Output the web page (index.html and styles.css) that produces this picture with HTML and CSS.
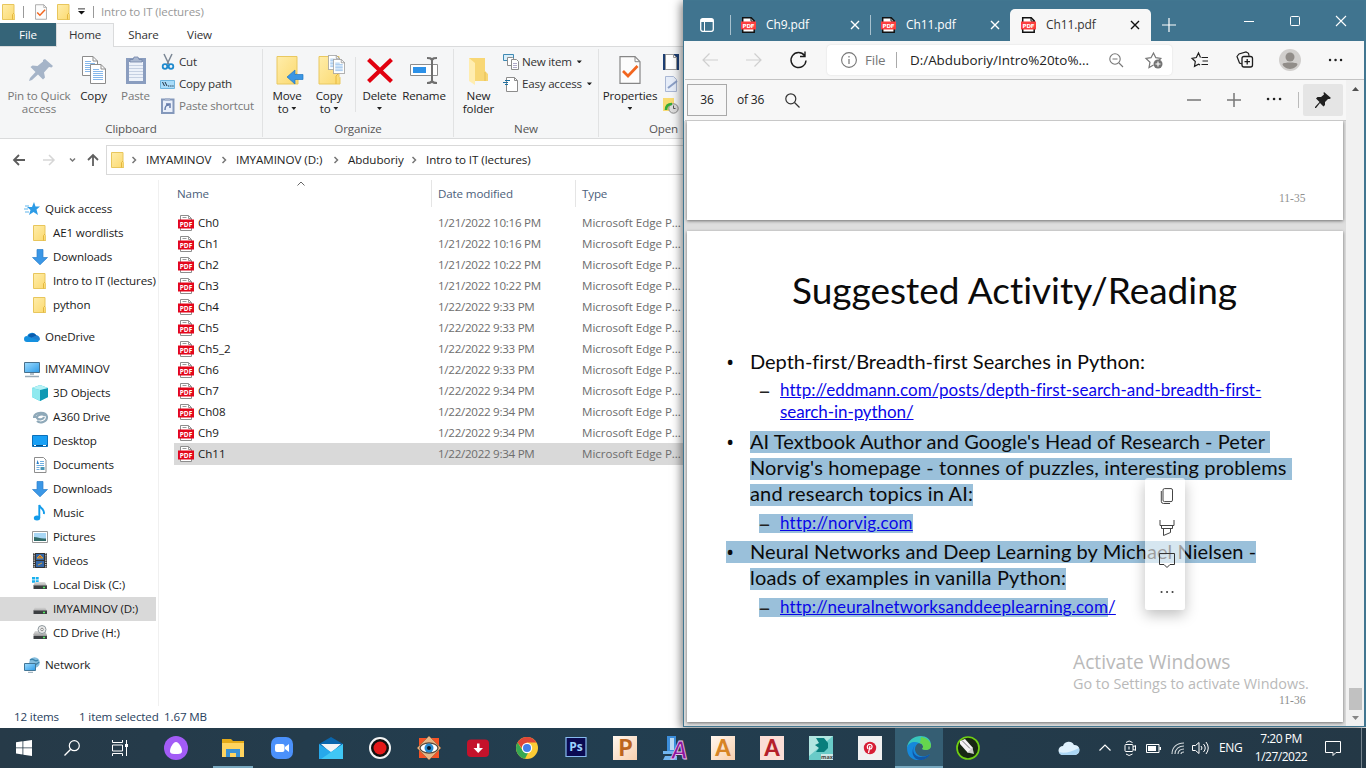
FILE: index.html
```html
<!DOCTYPE html>
<html lang="en">
<head>
<meta charset="utf-8">
<title>Desktop</title>
<link rel="stylesheet" href="styles.css">
</head>
<body>
<svg class="defs" aria-hidden="true">
  <defs>
    <linearGradient id="gFolder" x1="0" y1="0" x2="1" y2="1"><stop offset="0" stop-color="#ffedaa"/><stop offset="1" stop-color="#fbd96f"/></linearGradient>
    <linearGradient id="gScreen" x1="0" y1="0" x2="1" y2="1"><stop offset="0" stop-color="#9edcff"/><stop offset="1" stop-color="#2d9be8"/></linearGradient>
    <linearGradient id="gDisk" x1="0" y1="0" x2="0" y2="1"><stop offset="0" stop-color="#dcdcdc"/><stop offset="1" stop-color="#a9a9a9"/></linearGradient>
    <linearGradient id="gTan" x1="0" y1="0" x2="1" y2="1"><stop offset="0" stop-color="#fff7ee"/><stop offset="1" stop-color="#f8cfae"/></linearGradient>
  </defs>
</svg>
<svg class="symbols" aria-hidden="true">
  <symbol id="folder" viewBox="0 0 13 16"><path d="M.5.5h11.500v9l.8.8v5.200H.5z" fill="url(#gFolder)" stroke="#e8c65c"/><path d="M10.500 15.500v-5l1.500-1.500" fill="none" stroke="#e3b73e"/></symbol>
  <symbol id="pdf" viewBox="0 0 16 16"><path d="M2.500.5h8l3 3v12h-11z" fill="#fff" stroke="#8d8d8d"/><path d="M10.500.5v3h3M4.500 2.500h4" fill="none" stroke="#9a9a9a"/><rect y="4.500" width="16" height="9" fill="#e3071c"/><text x="8" y="11.600" class="pdf-text" text-anchor="middle">PDF</text></symbol>
  <symbol id="epdf" viewBox="0 0 15 16"><path d="M1.700.8h8.500l3 3v11.500H1.700z" fill="#fff" stroke="#111" stroke-width="1.500"/><path d="M10 .8v3.400h3" fill="none" stroke="#111"/><rect y="4.500" width="15" height="8" fill="#fb3f3f"/><text x="7.500" y="10.900" class="epdf-text" text-anchor="middle">PDF</text></symbol>
  <symbol id="down" viewBox="0 0 16 16"><path d="M5 .5h6v8h4.500L8 15.800.5 8.500H5z" fill="#3b97e6" stroke="#2b7fcb" stroke-width=".7"/></symbol>
  <symbol id="close" viewBox="0 0 10 10"><path d="M1 1l8 8M9 1l-8 8" fill="none" stroke="currentColor" stroke-width="1.400"/></symbol>
  <symbol id="chev" viewBox="0 0 6 8"><path d="M1.500 1l3 3-3 3" fill="none" stroke="#777" stroke-width="1.500"/></symbol>
  <symbol id="doc" viewBox="0 0 16 20"><path d="M.5.5h10.500l4.500 4.500v14.500H.5z" fill="#fff" stroke="#8c8c8c"/><path d="M11 .5v4.500h4.500" fill="none" stroke="#8c8c8c"/><path d="M3 7.500h10M3 9.500h10M3 11.500h10M3 13.500h10M3 15.500h10M3 5.500h6" stroke="#86b7ea"/></symbol>
  <symbol id="check" viewBox="0 0 22 28"><path d="M1 .7h15l5 5v21.600H1z" fill="#fcfcfc" stroke="#868686" stroke-width="1.200"/><path d="M16 .7v5h5" fill="none" stroke="#868686"/><path d="M4 15l5 5 9.500-10" fill="none" stroke="#f2651e" stroke-width="2.700"/></symbol>
</svg>

<div class="desktop">
  <main class="windows">
    <section class="explorer">
      <header class="ex-title">
        <svg class="i13"><use href="#folder"/></svg><i class="tsep"></i>
        <svg class="tcheck"><use href="#check"/></svg>
        <svg class="i13 second"><use href="#folder"/></svg>
        <svg class="tdrop" viewBox="0 0 8 7"><path d="M0 .5h8" stroke="#222"/><path d="M0 3h8L4 7z" fill="#111"/></svg>
        <i class="tsep"></i><span>Intro to IT (lectures)</span>
      </header>
      <nav class="ex-tabs"><b class="file">File</b><b class="home">Home</b><b class="share">Share</b><b class="view">View</b></nav>

      <div class="ribbon">
        <div class="group g-clip">
          <div class="tools">
            <div class="big off w-pin"><svg viewBox="0 0 32 32"><path d="M20 4l8 7-1.500 1.500L24 12l-5 5.500 1 5-2 2-5-5L7 25l-3 1 1-3 5.500-6-5-5 2-1.500 5 .5 5.500-4.500L18 5z" fill="#a5b4c8" transform="translate(2 -1)"/></svg><span>Pin to Quick<br>access</span></div>
            <div class="big w-copy"><svg viewBox="0 0 32 32"><use href="#doc" x="4" width="16" height="20"/><use href="#doc" x="12" y="8" width="16" height="20"/></svg><span>Copy</span></div>
            <div class="big off w-paste"><svg viewBox="0 0 32 32"><path d="M6 2h20v26H6z" fill="#8a9dbf"/><path d="M9 6h14v19H9z" fill="#edf2fa"/><path d="M10 6V3.500h3L14 1h4l1 2.500h3V6z" fill="#aab8d0" stroke="#7386aa" stroke-width=".8"/><path d="M9 9.500h14M9 12.500h14M9 15.500h14M9 18.500h14M9 21.500h14" stroke="#c5d0e2"/></svg><span>Paste</span></div>
            <div class="smalls s-clip">
              <div><svg viewBox="0 0 16 16"><path d="M4 0l5 10.500M12 0L7 10.500" stroke="#7b8795" stroke-width="1.500" fill="none"/><circle cx="5" cy="12.500" r="2.300" fill="none" stroke="#1e8ace" stroke-width="1.800"/><circle cx="11" cy="12.500" r="2.300" fill="none" stroke="#1e8ace" stroke-width="1.800"/></svg>Cut</div>
              <div><svg viewBox="0 0 16 16"><path d="M.5 4.500h14v8H.5z" fill="#a8dcfa" stroke="#6fb5de"/><path d="M2.500 6l2 4M5 6l2 4M8 10h1.300M10.200 10h1.300M12.300 10h1.300" stroke="#234" fill="none"/></svg>Copy path</div>
              <div class="off"><svg viewBox="0 0 16 16"><path d="M2 1.500h11.500V15H2z" fill="#e9effa" stroke="#8498bb" stroke-width="2"/><path d="M5 0h5v3H5z" fill="#a9b6ce"/><path d="M5 12c0-4 1-5 4-5M6 6h4v4" fill="none" stroke="#657caa" stroke-width="1.500"/></svg>Paste shortcut</div>
            </div>
          </div>
          <h3>Clipboard</h3>
        </div>
        <div class="group g-org">
          <div class="tools">
            <div class="big w-move"><svg viewBox="0 0 32 32"><path d="M6 .5h20v20l1 1v6.500H6z" fill="url(#gFolder)" stroke="#e9c860"/><path d="M23 28v-8l3-3" fill="none" stroke="#e6b93f"/><path d="M16 21l8-7v4.500h8v5h-8V28z" fill="#3a96e4" stroke="#1f78c4" stroke-width=".7"/></svg><span>Move<br>to <u class="dd"></u></span></div>
            <div class="big w-copyto"><svg viewBox="0 0 32 32"><path d="M6 .5h20v20l1 1v6.500H6z" fill="url(#gFolder)" stroke="#e9c860"/><path d="M23 28v-8l3-3" fill="none" stroke="#e6b93f"/><use href="#doc" x="15" y="-1" width="12" height="15"/><use href="#doc" x="20" y="3" width="12" height="15"/></svg><span>Copy<br>to <u class="dd"></u></span></div>
            <i class="vsep"></i>
            <div class="big w-del"><svg viewBox="0 0 32 32"><path d="M4.500 3.500l23 22M27.500 3.500l-23 22" stroke="#e1000f" stroke-width="4.200"/></svg><span>Delete<br><u class="dd"></u></span></div>
            <div class="big w-ren"><svg viewBox="0 0 32 32"><path d="M2.500 8.500h27v11h-27z" fill="#fff" stroke="#8c8c8c"/><path d="M5 11h13v6H5z" fill="#2c91e8"/><path d="M19 2c3 0 4 0 5 2 1-2 2-2 5-2M24 3v23M19 27c3 0 4 0 5-2 1 2 2 2 5 2" fill="none" stroke="#707070" stroke-width="2"/></svg><span>Rename</span></div>
          </div>
          <h3>Organize</h3>
        </div>
        <div class="group g-new">
          <div class="tools">
            <div class="big w-nf"><svg viewBox="0 0 32 32"><path d="M6 2h16v13l3 3v7H11z" fill="#f8d775"/><path d="M6 2l6 5v22l-6-4z" fill="#ffedb0"/><path d="M22 16v9" stroke="#e5be55"/></svg><span>New<br>folder</span></div>
            <div class="smalls s-new">
              <div><svg viewBox="0 0 16 16"><path d="M.5.500h10v6H.5z" fill="#d8eefa" stroke="#3f89b3"/><path d="M4.500 3.500h5l2 2v6h-7z" fill="#fff" stroke="#8c8c8c"/><path d="M8.500 5.500h5l2 2v8h-7z" fill="#fff" stroke="#8c8c8c"/><path d="M10 9.500h4M10 11.500h4M10 13.500h4" stroke="#b0a9c8"/></svg>New item<u class="dd"></u></div>
              <div><svg viewBox="0 0 16 16"><path d="M3.500 1.500h8l3 3v11h-11z" fill="#fff" stroke="#8c8c8c"/><path d="M11.500 1.500v3h3" fill="none" stroke="#8c8c8c"/><path d="M2 4.500h5M0 6.500h5M2 8.500h3" stroke="#1d6f9f" stroke-width="1.200"/></svg>Easy access<u class="dd"></u></div>
            </div>
          </div>
          <h3>New</h3>
        </div>
        <div class="group g-open">
          <div class="tools">
            <div class="big w-prop"><svg viewBox="0 0 32 32"><use href="#check" x="5" width="22" height="28"/></svg><span>Properties<br><u class="dd"></u></span></div>
            <div class="smalls s-open">
              <div><svg viewBox="0 0 16 16"><path d="M0 0h16v16H0z" fill="#1d3f73"/><path d="M2.500.5h8l3 3v12h-11z" fill="#fff" stroke="#999"/><path d="M10.500.5v3h3" fill="none" stroke="#999"/></svg></div>
              <div><svg viewBox="0 0 16 16"><path d="M2.500.5h8l3 3v12h-11z" fill="#e6edf9" stroke="#a9b7d4"/><path d="M5 12l9-7" stroke="#8b9fc6" stroke-width="2"/></svg></div>
              <div><svg viewBox="0 0 16 16"><path d="M0 0h11v13H0z" fill="#f8db72"/><circle cx="10.500" cy="10.500" r="4.700" fill="#ddd" stroke="#888"/><path d="M10.500 7.500v3h2" stroke="#555" fill="none"/><path d="M3 12c0-4 2-6 6-6" fill="none" stroke="#35ab38" stroke-width="2.700"/></svg></div>
            </div>
          </div>
          <h3>Open</h3>
        </div>
      </div>

      <div class="address">
        <svg class="arrows" viewBox="0 0 94 16"><path d="M25 8H14M19 3l-5 5 5 5" fill="none" stroke="#5c5c5c" stroke-width="1.800"/><path d="M43 8h11M49 3l5 5-5 5" fill="none" stroke="#d6d6d6" stroke-width="1.500"/><path d="M70 6.500l2.500 2.500L75 6.500" fill="none" stroke="#777" stroke-width="1.500"/><path d="M93 14V3M88 8l5-5 5 5" fill="none" stroke="#5f5f5f" stroke-width="1.800"/></svg>
        <div class="crumbs"><svg class="i13"><use href="#folder"/></svg><svg class="ch c0"><use href="#chev"/></svg><span class="k1">IMYAMINOV</span><svg class="ch"><use href="#chev"/></svg><span class="k2">IMYAMINOV (D:)</span><svg class="ch"><use href="#chev"/></svg><span class="k3">Abduboriy</span><svg class="ch"><use href="#chev"/></svg><span>Intro to IT (lectures)</span></div>
      </div>

      <div class="ex-body">
        <aside class="tree">
          <div class="top"><svg viewBox="0 0 16 16"><path d="M10 1l1.500 4.500H16l-3.500 3L14 14l-4.500-3L5 14l1.500-5L3 6h5z" fill="#2c9be6"/><path d="M1 5h4M0 8h4M1 11h4" stroke="#61b5ec" stroke-width="1.200"/></svg>Quick access</div>
          <div><svg viewBox="-1 0 16 16"><use href="#folder" width="13" height="16"/></svg>AE1 wordlists</div>
          <div><svg><use href="#down"/></svg>Downloads</div>
          <div><svg viewBox="-1 0 16 16"><use href="#folder" width="13" height="16"/></svg><em>Intro to IT (lectures)</em></div>
          <div class="last"><svg viewBox="-1 0 16 16"><use href="#folder" width="13" height="16"/></svg>python</div>
          <div class="top last"><svg viewBox="0 0 16 16"><path d="M3 8a5 5 0 0 1 9-2 4 4 0 0 1 2 7H3a3 3 0 0 1 0-6z" fill="#1590df"/><path d="M4 7a5 5 0 0 1 8.500-.5L8 9z" fill="#0b5cad"/><path d="M7 8.500l6-2a3.500 3.500 0 0 1 2.500 5z" fill="#1f7fd0"/></svg>OneDrive</div>
          <div class="top"><svg viewBox="0 0 16 16"><path d="M.5 1.500h15v10H.5z" fill="url(#gScreen)" stroke="#48708c"/><path d="M6 13h4M1 15.500h14" stroke="#9aabb7" stroke-width="1.300"/></svg>IMYAMINOV</div>
          <div><svg viewBox="0 0 16 16"><path d="M8 0l8 3v9l-8 4-8-4V3z" fill="#22c1d6"/><path d="M0 3l8 2v11l-8-4z" fill="#8fe9ef"/><path d="M8 5l8-2v9l-8 4z" fill="#1099b4"/><path d="M8 0l8 3-8 2-8-2z" fill="#b7f2f5"/></svg>3D Objects</div>
          <div><svg viewBox="0 0 16 16"><path d="M2 8c1-5 12-6 13 0 0 5-7 7-10 4M13 7c-2-3-9-1-8 2 1 2 6 2 7-1M1 8h4" fill="none" stroke="#8fa9b9" stroke-width="2.200"/></svg>A360 Drive</div>
          <div><svg viewBox="0 0 16 16"><path d="M.5 2.500h15v11H.5z" fill="#19a0f5" stroke="#0b70ba"/><path d="M1 12.500h14" stroke="#064f86"/><path d="M2 12.500h2M11 12.500h3" stroke="#fff"/></svg>Desktop</div>
          <div><svg viewBox="0 0 16 16"><path d="M2.500.5h9l2.500 2.500v12.500H2.500z" fill="#fff" stroke="#8d8d8d"/><path d="M8 4.500h4M8 6.500h4M4.500 8.500H12M4.500 10.500h3M4.500 12.500h3" stroke="#6faee0"/><path d="M4.500 7l1-4 1.500 4z" fill="#267bc7"/><path d="M8.500 10h4v3h-4z" fill="#4a95b5"/></svg>Documents</div>
          <div><svg><use href="#down"/></svg>Downloads</div>
          <div><svg viewBox="0 0 16 16"><ellipse cx="5" cy="13" rx="3.200" ry="2.500" fill="#129bea"/><path d="M7.300 13V0c1 4 6 4 4.500 9" fill="none" stroke="#129bea" stroke-width="1.900"/></svg>Music</div>
          <div><svg viewBox="0 0 16 16"><path d="M.5 2.500h15v11H.5z" fill="#fff" stroke="#999"/><path d="M2 4h12v8H2z" fill="#a9d7f5"/><path d="M2 8c4 0 6 2 12 1.500V12H2z" fill="#326b68"/></svg>Pictures</div>
          <div><svg viewBox="0 0 16 16"><path d="M1 0h14v15H1z" fill="#333"/><path d="M4 1h8v6H4zM4 8h8v6H4z" fill="#3567a8"/><path d="M2.200 0v15M13.800 0v15" stroke="#ddd" stroke-width="1.300" stroke-dasharray="1.200 1"/><path d="M5 5l3-3 3 3zM6 12l4-2" fill="#b55935" stroke="#d6a33b"/></svg>Videos</div>
          <div><svg viewBox="0 0 16 16"><path d="M0 0h3v2.500H0zM3.700 0h3v2.500h-3zM0 3.200h3v2.500H0zM3.700 3.200h3v2.500h-3z" fill="#19b0ee"/><path d="M3 5h10l2 4H1z" fill="url(#gDisk)"/><path d="M1.500 8.500h13.500V12H1.500z" fill="#3c3f42"/><path d="M11 10.500h2" stroke="#52ef62" stroke-width="1.300"/></svg>Local Disk (C:)</div>
          <div class="sel"><svg viewBox="0 0 16 16"><path d="M3 6h10l2 4H1z" fill="url(#gDisk)"/><path d="M1.500 9.500h13.500V13H1.500z" fill="#3c3f42"/><path d="M11 11.500h2" stroke="#52ef62" stroke-width="1.300"/></svg>IMYAMINOV (D:)</div>
          <div class="last"><svg viewBox="0 0 16 16"><path d="M3 6h10l2 4H1z" fill="url(#gDisk)"/><circle cx="10" cy="4.500" r="4" fill="#ececec" stroke="#8f999e"/><circle cx="10" cy="4.500" r="1.300" fill="#fff" stroke="#888"/><path d="M1.500 10.500h13.500V14H1.500z" fill="#3c3f42"/><path d="M11 12.500h2" stroke="#52ef62" stroke-width="1.300"/></svg>CD Drive (H:)</div>
          <div class="top"><svg viewBox="0 0 16 16"><circle cx="10.500" cy="5.500" r="5.300" fill="#85bddd"/><path d="M6 3c4-3 4 3 8 0M10 10c0-3 4-3 5-5" fill="none" stroke="#3e86ae" stroke-width="1.400"/><path d="M.5 6.500h11v7H.5z" fill="url(#gScreen)" stroke="#427696"/><path d="M4 15.300h5" stroke="#8fa4b2"/></svg>Network</div>
        </aside>
        <div class="files">
          <svg class="sort" viewBox="0 0 8 5"><path d="M.5 4.500L4 1l3.500 3.500" fill="none" stroke="#666"/></svg>
          <div class="fhead"><span>Name</span><span class="c">Date modified</span><span class="c">Type</span></div>
          <div class="rows">
            <div class="r"><svg><use href="#pdf"/></svg><b>Ch0</b><span class="d">1/21/2022 10:16 PM</span><span>Microsoft Edge P...</span></div>
            <div class="r"><svg><use href="#pdf"/></svg><b>Ch1</b><span class="d">1/21/2022 10:16 PM</span><span>Microsoft Edge P...</span></div>
            <div class="r"><svg><use href="#pdf"/></svg><b>Ch2</b><span class="d">1/21/2022 10:22 PM</span><span>Microsoft Edge P...</span></div>
            <div class="r"><svg><use href="#pdf"/></svg><b>Ch3</b><span class="d">1/21/2022 10:22 PM</span><span>Microsoft Edge P...</span></div>
            <div class="r"><svg><use href="#pdf"/></svg><b>Ch4</b><span class="d">1/22/2022 9:33 PM</span><span>Microsoft Edge P...</span></div>
            <div class="r"><svg><use href="#pdf"/></svg><b>Ch5</b><span class="d">1/22/2022 9:33 PM</span><span>Microsoft Edge P...</span></div>
            <div class="r"><svg><use href="#pdf"/></svg><b>Ch5_2</b><span class="d">1/22/2022 9:33 PM</span><span>Microsoft Edge P...</span></div>
            <div class="r"><svg><use href="#pdf"/></svg><b>Ch6</b><span class="d">1/22/2022 9:33 PM</span><span>Microsoft Edge P...</span></div>
            <div class="r"><svg><use href="#pdf"/></svg><b>Ch7</b><span class="d">1/22/2022 9:34 PM</span><span>Microsoft Edge P...</span></div>
            <div class="r"><svg><use href="#pdf"/></svg><b>Ch08</b><span class="d">1/22/2022 9:34 PM</span><span>Microsoft Edge P...</span></div>
            <div class="r"><svg><use href="#pdf"/></svg><b>Ch9</b><span class="d">1/22/2022 9:34 PM</span><span>Microsoft Edge P...</span></div>
            <div class="r sel"><svg><use href="#pdf"/></svg><b>Ch11</b><span class="d">1/22/2022 9:34 PM</span><span>Microsoft Edge P...</span></div>
          </div>
        </div>
      </div>
      <footer class="status"><span class="n">12 items</span><span class="s">1 item selected</span><span class="z">1.67 MB</span></footer>
    </section>

    <section class="edge">
      <header class="strip">
        <svg class="tabact" viewBox="0 0 14 14"><rect x=".7" y=".7" width="12.600" height="12.600" rx="2" fill="none" stroke="#fff" stroke-width="1.300"/><path d="M1 1h12v3H1z" fill="#fff"/><path d="M4.500 4v9" stroke="#fff"/></svg>
        <div class="tab t1"><svg class="ei"><use href="#epdf"/></svg><span>Ch9.pdf</span><svg class="x"><use href="#close"/></svg></div>
        <div class="tab t2"><svg class="ei"><use href="#epdf"/></svg><span>Ch11.pdf</span><svg class="x"><use href="#close"/></svg></div>
        <div class="tab on"><svg class="ei"><use href="#epdf"/></svg><span>Ch11.pdf</span><svg class="x"><use href="#close"/></svg></div>
        <svg class="plus" viewBox="0 0 14 14"><path d="M7 0v14M0 7h14" stroke="#fff" stroke-width="1.200"/></svg>
        <div class="winctl"><svg viewBox="0 0 10 10"><path d="M0 5.500h10" stroke="#fff"/></svg><svg viewBox="0 0 10 10"><rect x=".5" y=".5" width="9" height="9" rx="1" fill="none" stroke="#fff"/></svg><svg viewBox="0 0 10 10"><path d="M0 0l10 10M10 0L0 10" stroke="#fff" stroke-width="1.100"/></svg></div>
      </header>
      <div class="urlbar">
        <svg class="nav" viewBox="0 0 144 38"><path d="M36 19H21M27.500 12.500L21 19l6.500 6.500M64 19h15M72.500 12.500L79 19l-6.500 6.500" fill="none" stroke="#cfcfcf" stroke-width="1.200"/><path d="M122.500 14.500a7.500 7.500 0 1 0 1.500 5M123 10.500v5h-5" fill="none" stroke="#1b1b1b" stroke-width="1.400"/></svg>
        <div class="url">
          <svg class="i16" viewBox="0 0 16 16"><circle cx="8" cy="8" r="7.400" fill="none" stroke="#767676" stroke-width="1.100"/><path d="M8 7v5M8 4v1.500" stroke="#767676" stroke-width="1.200"/></svg>
          <span class="scheme">File</span><i></i><span class="path">D:/Abduboriy/Intro%20to%...</span>
          <svg class="lens" viewBox="0 0 15 15"><circle cx="6" cy="6" r="5.200" fill="none" stroke="#777" stroke-width="1.100"/><path d="M10 10l4 4M3.500 6h5" stroke="#777" stroke-width="1.100"/></svg>
          <svg class="fav" viewBox="0 0 18 17"><path d="M8.500 13l-4.500 2.500 1-5.300L1 6.500l5-.8L8.500 1l2.300 4.700 5 .8-2 2" fill="none" stroke="#777" stroke-width="1.200"/><circle cx="13" cy="12" r="4.500" fill="#747474"/><path d="M13 9.500v5M10.500 12h5" stroke="#fff" stroke-width="1.100"/></svg>
        </div>
        <div class="extras">
          <svg viewBox="0 0 18 18"><path d="M9.500 6.500L7.500 2 5.300 6.500l-4.300.8 3.300 3.200-.8 4.800 4-2.200 1.500.8M10.500 6.500H17M11.500 10H17M10.500 13.500H17" fill="none" stroke="#1e1e1e" stroke-width="1.200"/></svg>
          <svg viewBox="0 0 18 18"><path d="M6 13l-2.500-1L1 5.500 3 3l7-2 2.500 1.300.6 2.500" fill="none" stroke="#1e1e1e" stroke-width="1.200"/><rect x="6" y="5.500" width="10.500" height="10.500" rx="2" fill="#f7f7f7" stroke="#1e1e1e" stroke-width="1.300"/><path d="M11.200 8v5.500M8.500 10.700H14" stroke="#1e1e1e" stroke-width="1.300"/></svg>
          <svg class="ava" viewBox="0 0 22 22"><circle cx="11" cy="11" r="11" fill="#d1cfcd"/><circle cx="11" cy="8" r="4.500" fill="#918d89"/><path d="M3.500 15c1-2 14-2 15 0 0 2-4 5-7.500 5s-7.500-3-7.500-5z" fill="#918d89"/></svg>
          <svg viewBox="0 0 18 18"><path d="M4 9h.1M9.500 9h.1M15 9h.1" stroke="#222" stroke-width="2.400" stroke-linecap="round"/></svg>
        </div>
      </div>
      <div class="pdf">
        <div class="pdfmain">
          <div class="pdfbar">
            <div class="num">36</div><span>of 36</span>
            <svg class="find" viewBox="0 0 15 15"><circle cx="5.800" cy="5.800" r="5" fill="none" stroke="#333" stroke-width="1.200"/><path d="M9.500 9.500l5 5" stroke="#333" stroke-width="1.300"/></svg>
            <svg class="zooms" viewBox="0 0 112 16"><path d="M1 8h14M41 8h14M48 1v14" stroke="#777" stroke-width="1.500"/><path d="M82 7h.1M88 7h.1M94 7h.1" stroke="#222" stroke-width="2.500" stroke-linecap="round"/><path d="M112.500 0v16" stroke="#bbb"/></svg>
            <div class="pin"><svg viewBox="0 0 16 16"><path d="M9 0l7 6-1.500 1L13 7l-3 3v3l-1.500 1.500L5 11l-4 5H0v-1l4.500-5L1 6.500 2.500 5H6l3-2.500L8.500 1z" fill="#202020"/></svg></div>
          </div>
          <div class="pages">
            <div class="page prev"><span>11-35</span></div>
            <article class="page slide">
              <h1>Suggested Activity/Reading</h1>
              <p class="li l1"><i>•</i><span>Depth-first/Breadth-first Searches in Python:</span></p>
              <p class="sub s1"><i>–</i><a>http://eddmann.com/posts/depth-first-search-and-breadth-first-</a></p>
              <p class="sub s2"><i></i><a>search-in-python/</a></p>
              <p class="li l2"><i>•</i><span class="hl">AI Textbook Author and Google's Head of Research - Peter </span></p>
              <p class="li l3"><i></i><span class="hl">Norvig's homepage - tonnes of puzzles, interesting problems </span></p>
              <p class="li l4"><i></i><span class="hl">and research topics in AI:</span></p>
              <p class="sub s3"><i class="hl">–</i><a class="hl">http://norvig.com</a></p>
              <p class="li l5"><i class="hl">•</i><span class="hl">Neural Networks and Deep Learning by Michael Nielsen -</span></p>
              <p class="li l6"><i></i><span class="hl">loads of examples in vanilla Python:</span></p>
              <p class="sub s4"><i class="hl">–</i><a class="hl">http://neuralnetworksanddeeplearning.com</a><a>/</a></p>
              <div class="watermark"><strong>Activate Windows</strong><span>Go to Settings to activate Windows.</span></div>
              <span class="pno">11-36</span>
            </article>
          </div>
        </div>
        <div class="scroll"><svg viewBox="0 0 7 4"><path d="M0 4l3.500-4L7 4z" fill="#505050"/></svg><i></i><svg viewBox="0 0 7 4"><path d="M0 0h7L3.500 4z" fill="#858585"/></svg></div>
      </div>
      <div class="popup">
        <svg viewBox="0 0 16 16"><rect x="4" y=".6" width="9.500" height="13" rx="1.500" fill="none" stroke="#444"/><path d="M2.300 3v10.300q0 2.200 2.200 2.200H11" fill="none" stroke="#444"/></svg>
        <svg viewBox="0 0 16 16"><path d="M1 0v5.500h14V0M2.500 5.500v3h11v-3M4.500 8.500v7l7-3v-4" fill="none" stroke="#444"/></svg>
        <svg viewBox="0 0 16 16"><path d="M.5 1.500h15v11H11l-3 3-3-3H.5z" fill="none" stroke="#333"/></svg>
        <svg viewBox="0 0 16 16"><path d="M2.500 8h.1M8 8h.1M13.500 8h.1" stroke="#444" stroke-width="2" stroke-linecap="round"/></svg>
      </div>
    </section>
  </main>

  <footer class="taskbar">
    <div class="sys">
      <svg viewBox="0 0 16 16"><path d="M0 2.200l6.500-.9v6.200H0zM7.300 1.200L16 0v7.500H7.300zM0 8.300h6.500v6.200L0 13.600zM7.300 8.300H16V16l-8.700-1.300z" fill="#fff"/></svg>
      <svg viewBox="0 0 16 16"><circle cx="10.300" cy="5.700" r="5" fill="none" stroke="#fff" stroke-width="1.200"/><path d="M6.700 9.300L.5 15.500" stroke="#fff" stroke-width="1.300"/></svg>
      <svg viewBox="0 0 16 16"><path d="M.5 0v2.500h10V0M.5 16v-2.500h10V16M.5 5h10v6H.5zM14.500 0v16" fill="none" stroke="#fff"/><path d="M13 4h3v3h-3z" fill="#fff"/></svg>
    </div>
    <div class="apps">
      <div class="alice"><svg viewBox="0 0 24 24"><circle cx="12" cy="12" r="12" fill="#a35cf6"/><path d="M12 6c3 0 6 6 6 9s-3 3-6 3-6 0-6-3 3-9 6-9z" fill="#fff"/></svg></div>
      <div class="open"><svg viewBox="0 0 24 24"><path d="M1 3h9l2 2h11v16H1z" fill="#e5aa18"/><path d="M1 7h22v14H1z" fill="#ffd45f"/><path d="M5 21v-8h14v8h-4v-4H9v4z" fill="#3a91d5"/></svg></div>
      <div><svg viewBox="0 0 24 24"><rect x="1" y="1" width="22" height="22" rx="7" fill="#4b91fb"/><rect x="5" y="8" width="9.500" height="8" rx="2" fill="#fff"/><path d="M15 11l4-3v8l-4-3z" fill="#fff"/></svg></div>
      <div><svg viewBox="0 0 24 24"><path d="M0 8l12-7 12 7v15H0z" fill="#0a66ad"/><path d="M2 8h20l-10 9z" fill="#f2f5f7"/><path d="M0 8l12 8 12-8v15H0z" fill="#27a9eb"/><path d="M24 8v15H2z" fill="#40c7f5"/></svg></div>
      <div><svg viewBox="0 0 24 24"><circle cx="12" cy="12" r="10" fill="#111" stroke="#f4f4f4" stroke-width="2"/><circle cx="12" cy="12" r="6.500" fill="#e51919"/></svg></div>
      <div><svg viewBox="0 0 24 24"><path d="M2 2h20v20H2z" fill="#f65326"/><path d="M0 12L12 0l12 12-12 12z" fill="#e5b788" stroke="#8b5b36" stroke-width=".5"/><ellipse cx="12" cy="12" rx="9" ry="5" fill="#fff" stroke="#56483b" stroke-width="1.300"/><circle cx="12" cy="12" r="4.500" fill="#268bd1"/><circle cx="12" cy="12" r="2" fill="#081927"/></svg></div>
      <div><svg viewBox="0 0 24 24"><rect x="1" y="3.500" width="22" height="17.500" rx="4" fill="#c4122b"/><path d="M11 7.500h2.500v4.500H17l-4.800 5-4.700-5H11z" fill="#fff"/></svg></div>
      <div><svg viewBox="0 0 24 24"><circle cx="12" cy="12" r="11" fill="#fccb35"/><path d="M2.500 6.500A11 11 0 0 1 21.500 6.500H12L9 15z" fill="#df4638"/><path d="M2.500 6.500L8 15l5 2-3 5.800A11 11 0 0 1 2.500 6.500z" fill="#36a852"/><circle cx="12" cy="12" r="5.200" fill="#fff"/><circle cx="12" cy="12" r="4" fill="#427fe9"/></svg></div>
      <div class="ps"><svg viewBox="0 0 24 24"><path d="M2 2.500h20v19H2z" fill="#0a0a52" stroke="#86baf0" stroke-width="1.200"/><text x="12" y="16" text-anchor="middle" class="t-ps">Ps</text></svg></div>
      <div><svg viewBox="0 0 24 24"><path d="M0 0h24v24H0z" fill="url(#gTan)"/><text x="12.500" y="20" text-anchor="middle" class="t-app brown">P</text></svg></div>
      <div><svg viewBox="0 0 24 24"><path d="M5 0h9v15H5z" fill="#3c8edb"/><path d="M8 2h4v12H8z" fill="#b9d9f4"/><path d="M1 15h13v3H1zM3 20h12v4H1z" fill="#71b5ef"/><text x="17.500" y="23" text-anchor="middle" class="t-arc purple" stroke="#e6c4ed" stroke-width=".8">A</text></svg></div>
      <div><svg viewBox="0 0 24 24"><path d="M0 0h24v24H0z" fill="url(#gTan)"/><text x="12" y="20" text-anchor="middle" class="t-app amber">A</text></svg></div>
      <div><svg viewBox="0 0 24 24"><path d="M0 0h24v24H0z" fill="#fbded6"/><text x="12" y="20" text-anchor="middle" class="t-app red">A</text></svg></div>
      <div><svg viewBox="0 0 24 24"><path d="M0 0h24v24H0z" fill="#69cbc8"/><path d="M0 0h24L0 20z" fill="#b1e6e1"/><path d="M7 2h8l4 5v5l-4 4H7l3-4-4-3 4-2z" fill="#087f7d"/><path d="M12 18h12v6H12z" fill="#cfe9e7"/><text x="18" y="23" text-anchor="middle" class="t-max">max</text></svg></div>
      <div><svg viewBox="0 0 24 24"><path d="M0 0h24v24H0z" fill="#f1f1f1"/><circle cx="12" cy="12" r="6.200" fill="#d71e35"/><path d="M10 13c-2-4 1-5 2.500-4.500 3 1 1 6-1 4M12 10l-1.500 7" fill="none" stroke="#fff" stroke-width="1.200"/></svg></div>
      <div class="active"><svg viewBox="0 0 24 24"><path d="M0 12C1-3 24-4 24 9c0 4-5 6-9 4 3-2 0-6-4-6-5 0-9 3-11 5z" fill="#38c7bd"/><path d="M14 1c7 1 10 5 10 9s-5 5-9 3c2-2 1-5-2-6z" fill="#65d64e"/><path d="M0 12c1-6 8-7 12-5-5 2-6 10 1 13 4 1 7 0 10-2-4 8-23 10-23-6z" fill="#1688da"/><path d="M8 9c-4 5-1 12 6 12 4 0 6-1 9-3-2 4-6 6-10 6C6 24 3 15 8 9z" fill="#1257a6"/></svg></div>
      <div><svg viewBox="0 0 24 24"><circle cx="12" cy="12" r="11" fill="#182713" stroke="#70cf13" stroke-width="1.700"/><path d="M4 5l5-2 8 9-5 5-8-9z" fill="#f4f4f4"/><path d="M11.500 16.500l5-5 1.500 6.500z" fill="#c9c9c9"/><path d="M6 4.500l8 8" stroke="#777"/></svg></div>
    </div>
    <div class="tray">
      <svg class="cloud" viewBox="0 0 22 16"><path d="M5 6a6 6 0 0 1 11-1 5 5 0 0 1 1 10H5A4.500 4.500 0 0 1 5 6z" fill="#dff1fd"/><path d="M1 12c5 2 12 0 20-4 1 5-2 7-5 7H5c-2 0-4-1-4-3z" fill="#acd7f5"/></svg>
      <svg class="up" viewBox="0 0 12 12"><path d="M.500 8.500L6 3l5.500 5.500" fill="none" stroke="#fff" stroke-width="1.200"/></svg>
      <svg class="cam" viewBox="0 0 12 16"><rect x="1" y="4.500" width="8" height="7" rx="1" fill="none" stroke="#fff"/><path d="M9 7l2.500-1.500v5L9 9M2 2.500q3-3 6.500 0M2 14q3 3 6.500 0M5 6.500v3" fill="none" stroke="#fff"/></svg>
      <svg class="bat" viewBox="0 0 15 9"><path d="M.5.500h12.500v8H.5z" fill="none" stroke="#fff"/><path d="M2 2h8v5H2zM13.500 3h1.500v3h-1.500z" fill="#fff"/></svg>
      <svg class="wifi" viewBox="0 0 14 14"><path d="M1 13C1 6 6 2 13 2M4 13c0-5 4-8 9-8M7 13c0-3 2-5 6-5M10 13c0-1 1-2 3-2" fill="none" stroke="#d4dadd" stroke-width="1.100"/></svg>
      <svg class="vol" viewBox="0 0 17 14"><path d="M.5 4.500h3l3.500-3v11l-3.500-3h-3zM9 5q2 2 0 4M11.500 3q3.500 4 0 8M14 1q4.500 6 0 12" fill="none" stroke="#fff"/></svg>
      <span class="eng">ENG</span>
      <div class="clock"><span>7:20 PM</span><span>1/27/2022</span></div>
      <svg class="note" viewBox="0 0 16 16"><path d="M.5 1.500h15v11H11l-3 3v-3H.5z" fill="none" stroke="#fff"/></svg>
      <i class="show"></i>
    </div>
  </footer>
</div>
</body>
</html>
```
FILE: styles.css
```css
* { box-sizing: border-box; }
body { margin: 0; overflow: hidden; background: #fff; font: 12px/16px "Open Sans", "Noto Sans", sans-serif; color: #222; }
svg { display: block; flex: none; overflow: visible; }
i, em { font-style: normal; }
b { font-weight: 400; }
span { white-space: pre; }
.defs { position: absolute; width: 0; height: 0; overflow: hidden; }
.symbols { display: none; }
.pdf-text { font: 700 6.500px "Open Sans"; fill: #fff; }
.epdf-text { font: 700 5.500px "DejaVu Sans"; fill: #fff; }
.desktop { width: 1366px; height: 768px; display: flex; flex-direction: column; overflow: hidden; }
.windows { height: 728px; display: flex; }

/* File explorer */
.explorer { width: 683px; flex: none; height: 728px; display: flex; flex-direction: column; overflow: hidden; background: #fff; font-size: 11.600px; letter-spacing: -.14px; }
.ex-title { height: 23px; display: flex; align-items: center; padding: 1px 0 0 2px; color: #999; }
.i13 { width: 13px; height: 16px; }
.tsep { width: 1px; height: 12px; background: #999; margin: 0 7px 0 8px; }
.tcheck { width: 12px; height: 16px; margin: 0 10px 0 4px; }
.tdrop { width: 7px; height: 7px; margin-left: 8px; }
.ex-tabs { height: 24px; display: flex; border-bottom: 1px solid #dadbdc; line-height: 24px; }
.ex-tabs b { text-align: center; height: 24px; color: #333; }
.ex-tabs .file { width: 56px; background: #356478; color: #fff; height: 23px; }
.ex-tabs .home { width: 58px; background: #f5f6f7; border: 1px solid #dadbdc; border-bottom: 0; line-height: 22px; }
.ex-tabs .share { width: 59px; }
.ex-tabs .view { width: 53px; }
.ribbon { height: 92px; display: flex; background: #f5f6f7; border-bottom: 1px solid #dadbdc; }
.group { height: 88px; margin-top: 2px; border-right: 1px solid #e1e2e3; flex: none; }
.g-clip { width: 263px; } .g-org { width: 191px; } .g-new { width: 145px; } .g-open { width: 130px; }
.group h3 { margin: 0; font: inherit; text-align: center; color: #555; line-height: 16px; }
.tools { height: 72px; display: flex; }
.big { display: flex; flex-direction: column; align-items: center; padding-top: 7px; text-align: center; line-height: 13px; flex: none; }
.big svg { width: 32px; height: 32px; margin-bottom: 1px; }
.big span { white-space: nowrap; }
.off { color: #787878; }
.w-pin { width: 78px; } .w-copy { width: 31px; } .w-paste { width: 53px; }
.w-move { width: 44px; margin-left: 2px; } .w-copyto { width: 40px; margin-right: 6px; }
.w-del { width: 47px; } .w-ren { width: 42px; }
.w-nf { width: 49px; } .w-prop { width: 62px; }
.vsep { width: 1px; height: 55px; background: #e1e2e3; margin-top: 8px; }
.dd { display: inline-block; width: 5px; height: 3px; background: #222; clip-path: polygon(0 0, 100% 0, 50% 100%); vertical-align: 3px; }
.smalls { padding-top: 2px; color: #333; letter-spacing: -.22px; }
.s-clip { margin-left: -2px; }
.smalls div { height: 22px; display: flex; align-items: center; gap: 3px; white-space: nowrap; }
.smalls .off { color: #787878; }
.smalls svg { width: 16px; height: 16px; }
.smalls .dd { margin-left: 2px; }
.s-open { margin-left: 2px; }
.address { height: 42px; display: flex; align-items: center; }
.arrows { width: 94px; height: 16px; margin-right: 12px; }
.crumbs { flex: 1; height: 30px; border: 1px solid #d9d9d9; border-right: 0; display: flex; align-items: center; padding-left: 4px; letter-spacing: -.05px; }
.k1 { width: 68px; } .k2 { width: 90px; } .k3 { width: 56px; }
.ch { width: 6px; height: 8px; margin: 0 9px 0 7px; }
.ch.c0 { margin: 0 9px 0 7px; }
.ex-body { display: flex; height: 527px; margin-top: -1px; }
.tree { width: 159px; padding-top: 17px; border-right: 1px solid #f0f0f0; color: #1a1a1a; }
.tree div { height: 24px; width: 156px; display: flex; align-items: center; gap: 5px; padding-left: 32px; white-space: nowrap; }
.tree svg { width: 16px; height: 16px; }
.tree .top { padding-left: 24px; }
.tree .last { margin-bottom: 8px; }
.sel { background: #d9d9d9; }
.files { flex: 1; padding-left: 15px; }
.sort { width: 8px; height: 5px; margin: 1px 0 0 123px; }
.fhead { display: grid; grid-template-columns: 257px 144px 1fr; color: #4c607a; height: 26px; margin-top: -6px; line-height: 27px; }
.fhead span { padding-left: 3px; }
.fhead .c { border-left: 1px solid #e5e5e5; padding-left: 6px; }
.rows { padding-top: 6px; }
.r { height: 22px; margin-bottom: -1px; display: grid; grid-template-columns: 24px 240px 144px 1fr; align-items: center; color: #6d6d6d; letter-spacing: -.04px; }
.r svg { width: 16px; height: 16px; margin-left: 4px; }
.r b { color: #1a1a1a; }
.r .d { letter-spacing: -.28px; }
.status { height: 22px; display: flex; align-items: center; color: #28415e; }
.status .n { margin-left: 14px; width: 65px; }
.status .s { width: 80px; }
.status .z { margin-left: 5px; }

/* Browser window */
.edge { position: relative; width: 683px; flex: none; height: 727px; border: 1px solid #417690; border-right-width: 2px; padding-left: 1px; background: #f7f7f7; box-shadow: -2px 2px 9px rgba(0,0,0,.5); }
.strip { height: 40px; background: #40748f; display: flex; align-items: center; color: #fff; margin-left: -1px; padding-left: 16px; padding-top: 8px; }
.tabact { width: 14px; height: 14px; }
.tab { height: 32px; width: 141px; display: flex; align-items: center; padding-left: 11px; flex: none; letter-spacing: -.1px; }
.t1 { margin-left: 16px; width: 140px; }
.ei { width: 15px; height: 16px; }
.tab span { width: 84px; margin-left: 10px; }
.tab .x { width: 10px; height: 10px; }
.tab:not(.on) { background: linear-gradient(#a8c1ce, #a8c1ce) 0 6px / 1px 20px no-repeat; }
.tab.on { background: #f7f7f7; color: #333; border-radius: 5px 5px 0 0; width: 141px; padding-left: 11px; }
.t2 { width: 140px; padding-left: 11px; }
.tab.on .x { color: #111; }
.plus { width: 14px; height: 14px; margin: 0 0 0 11px; }
.winctl { display: flex; gap: 36px; margin: -8px 0 0 68px; }
.winctl svg { width: 10px; height: 10px; }
.urlbar { height: 38px; display: flex; align-items: center; }
.nav { width: 144px; height: 38px; margin-left: -3px; }
.url { width: 345px; height: 30px; border-radius: 4px; background: #fff; box-shadow: 0 0 2px rgba(0,0,0,.12); margin-left: 1px; display: flex; align-items: center; padding-left: 14px; font-size: 13.400px; }
.i16 { width: 16px; height: 16px; }
.scheme { margin-left: 8px; color: #777; width: 31px; letter-spacing: -.2px; }
.url i { width: 1px; height: 16px; background: #aaa; }
.path { margin-left: 13px; width: 199px; color: #222; }
.lens { width: 15px; height: 15px; }
.fav { width: 18px; height: 17px; margin-left: 21px; }
.extras { display: flex; align-items: center; margin-left: 19px; gap: 27px; }
.extras svg { width: 18px; height: 18px; }
.extras .ava { width: 22px; height: 22px; margin: 0 -2px; }
.pdf { height: 647px; display: flex; border-top: 1px solid #c3c3c3; }
.pdfmain { width: 661px; height: 646px; }
.pdfbar { height: 41px; border-bottom: 1px solid #c8c8c8; display: flex; align-items: center; padding-left: 2px; }
.num { width: 40px; height: 32px; border: 1px solid #a9a9a9; display: grid; place-items: center; margin-right: 10px; }
.pdfbar > span { width: 28px; letter-spacing: -.2px; }
.find { width: 15px; height: 15px; margin-left: 20px; }
.zooms { width: 112px; height: 16px; margin-left: 386px; }
.pin { width: 40px; height: 32px; background: #e5e5e5; margin-left: 5px; display: grid; place-items: center; border-radius: 2px; }
.pin svg { width: 16px; height: 16px; }
.pages { height: 605px; background: #dedede; overflow: hidden; margin-left: -1px; padding-left: 3px; }
.page { width: 656px; background: #fff; box-shadow: 0 1px 3px rgba(0,0,0,.5); }
.prev { height: 99px; padding: 67px 0 0 592px; font: 11.500px/20px "Liberation Serif", serif; color: #909090; }
.slide { height: 491px; margin-top: 11px; padding-top: 33px; font-family: Lato, Carlito, sans-serif; color: #0b0b0b; font-variant-ligatures: none; }
.slide h1 { margin: 0; font-size: 37px; font-weight: 400; line-height: 52px; height: 52px; padding-left: 105px; white-space: nowrap; }
.slide p { margin: 0; display: flex; white-space: pre; }
.hl { background: #9ac0da; }
.li { height: 23px; line-height: 20px; font-size: 20px; letter-spacing: .07px; padding-left: 39px; }
.li i { width: 24px; font: 22px/21px "Open Sans"; }
.li .hl { height: 22px; }
.sub { height: 19px; line-height: 18px; font-size: 17px; letter-spacing: .03px; padding-left: 72px; }
.sub i { width: 21px; color: #222; font: 22px/16px "Open Sans"; }
.sub a { color: #0906e8; text-decoration: underline; }
.slide .l1 { margin-top: 35px; letter-spacing: -.02px; }
.slide .s1 { margin-top: 7px; }
.slide .s2 { margin-top: 3px; letter-spacing: -.08px; }
.slide .l2 { margin-top: 9px; }
.slide .l3 { margin-top: 4px; letter-spacing: .16px; line-height: 18px; }
.slide .l4 { margin-top: 3px; letter-spacing: .16px; line-height: 18px; }
.slide .s3 { margin-top: 7px; letter-spacing: .22px; }
.slide .l5 { margin-top: 8px; }
.slide .l6 { margin-top: 4px; letter-spacing: .17px; line-height: 18px; }
.slide .s4 { margin-top: 7px; letter-spacing: .15px; }
.watermark { margin: 33px 0 0 386px; color: #b9b9b9; display: flex; flex-direction: column; font-family: "Open Sans", sans-serif; font-variant-ligatures: normal; }
.watermark strong { font-weight: 400; font-size: 19.200px; line-height: 24px; }
.watermark span { font-size: 14.400px; line-height: 20px; }
.pno { display: block; margin: -1px 0 0 592px; font: 11.500px/14px "Liberation Serif", serif; color: #8b8b8b; }
.scroll { width: 18px; background: #f1f1f1; display: flex; flex-direction: column; align-items: center; padding-top: 7px; }
.scroll svg { width: 7px; height: 4px; }
.scroll i { width: 13px; height: 22px; background: #c1c1c1; margin: 597px 0 6px; }
.popup { position: absolute; left: 461px; top: 477px; width: 40px; height: 132px; border-radius: 3px; background: rgba(255,255,255,.6); box-shadow: 0 5px 14px rgba(0,0,0,.25); display: flex; flex-direction: column; align-items: center; gap: 16px; padding: 10px 0 0 4px; }
.popup svg { width: 16px; height: 16px; }

/* Taskbar */
.taskbar { height: 40px; background: linear-gradient(90deg, #263a48, #223e50 45%, #243846); display: flex; color: #fff; position: relative; font-size: 12px; }
.sys, .apps { display: flex; align-items: center; }
.sys { gap: 32px; padding-left: 16px; width: 152px; }
.sys svg { width: 16px; height: 16px; }
.apps { gap: 1px; }
.apps div { width: 48px; height: 40px; display: grid; place-items: center; flex: none; }
.apps .alice { margin-right: 8px; }
.apps svg { width: 24px; height: 24px; }
.apps .open { background: linear-gradient(#78a8bf, #78a8bf) 50% 100% / 40px 2px no-repeat; }
.apps .active { background: #355e73; border-bottom: 2px solid #78a8bf; padding-top: 2px; }
.ps { padding-bottom: 3px; }
.t-ps { font: 700 12px "Open Sans"; fill: #9bd2ff; }
.t-app { font: 900 22px Lato; }
.t-arc { font: italic 900 24px Lato; }
.brown { fill: #bd6520; } .purple { fill: #8b159c; } .amber { fill: #d78425; } .red { fill: #b51f2a; }
.t-max { font: 700 5.500px "Open Sans"; fill: #444; }
.tray { display: flex; align-items: center; margin-left: 66px; }
.cloud { width: 22px; height: 16px; } .up { width: 12px; height: 12px; margin-left: 19px; }
.cam { width: 12px; height: 16px; margin-left: 13px; } .bat { width: 15px; height: 9px; margin-left: 10px; }
.wifi { width: 14px; height: 14px; margin-left: 10px; } .vol { width: 17px; height: 14px; margin-left: 7px; }
.eng { width: 24px; margin-left: 10px; letter-spacing: -.3px; }
.clock { width: 64px; margin-left: 6px; display: flex; flex-direction: column; text-align: center; line-height: 18px; letter-spacing: -.5px; }
.note { width: 16px; height: 16px; margin-left: 12px; }
.show { width: 1px; height: 40px; background: #76848e; margin-left: 20px; }
```
